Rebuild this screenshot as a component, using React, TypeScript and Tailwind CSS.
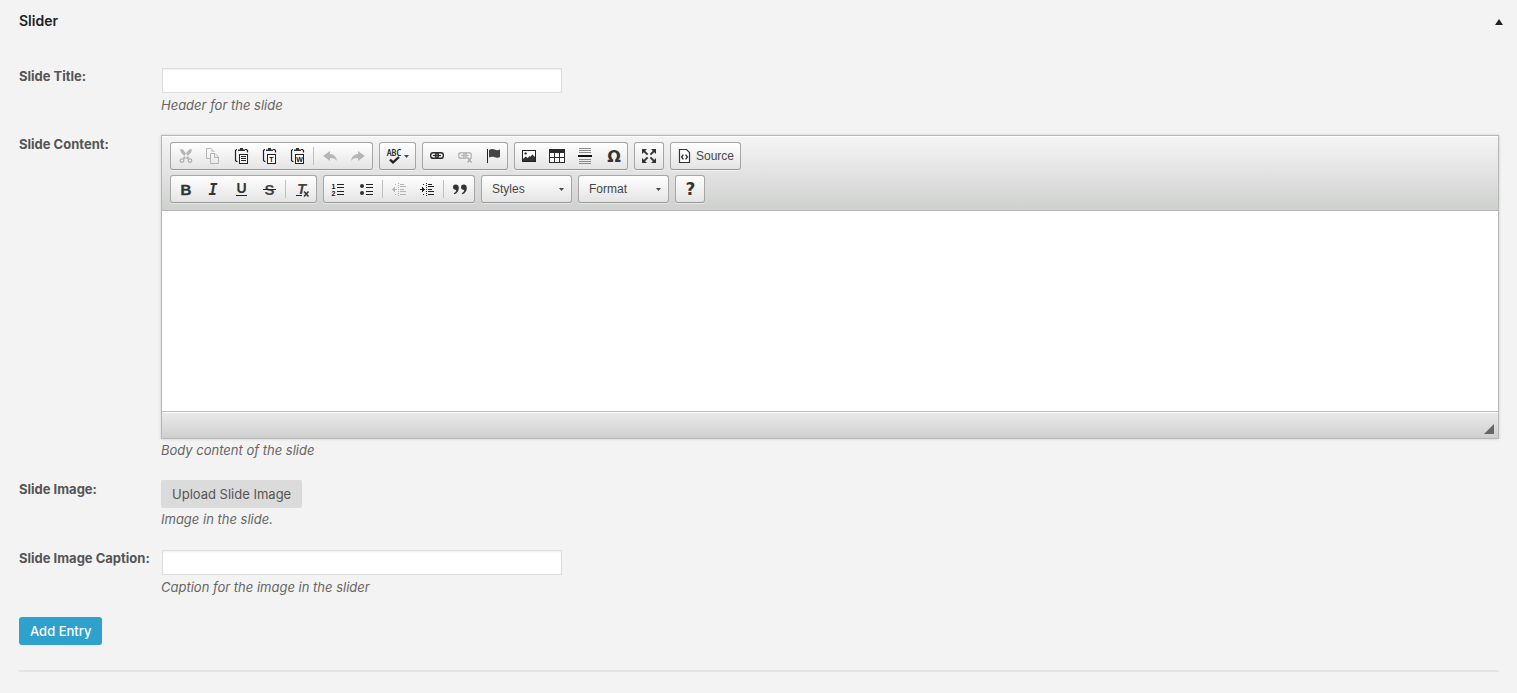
import React, { useState } from 'react';
import { clsx } from 'clsx';

const ICON_SANS = '"Liberation Sans", Arial, sans-serif';
const ICON_WIDE = '"DejaVu Sans", Verdana, sans-serif';
const ICON_MONO = '"DejaVu Sans Mono", monospace';

interface IconProps {
  children: React.ReactNode;
  crisp?: boolean;
}

function Icon({ children, crisp }: IconProps) {
  return (
    <svg
      viewBox="0 0 16 16"
      className="block h-4 w-4 shrink-0 overflow-visible"
      shapeRendering={crisp ? 'crispEdges' : 'auto'}
      fill="none"
      aria-hidden="true"
    >
      {children}
    </svg>
  );
}

const CutIcon = () => (
  <Icon>
    <path d="M3.2 1 6 1.4 12.4 10.2 10.4 11.6 3.6 4zM14.8 1 12 1.4 5.6 10.2 7.6 11.6 14.4 4z" fill="#b5b5b5" />
    <circle cx="5" cy="12.6" r="1.8" stroke="#b0b0b0" strokeWidth="1.3" />
    <circle cx="13" cy="12.6" r="1.8" stroke="#b0b0b0" strokeWidth="1.3" />
  </Icon>
);

const CopyIcon = () => (
  <Icon>
    <path d="M5 10.5H1.5V.5H6L9.5 4" stroke="#b4b4b4" />
    <path d="M6.5.5V3.5H9.5" stroke="#d0d0d0" />
    <path d="M5.5 5.5H10L13.5 9V15.5H5.5z" stroke="#b4b4b4" />
    <path d="M9.5 5.5V9.5H13.5" stroke="#b4b4b4" />
  </Icon>
);

function PasteIcon({ children }: { children: React.ReactNode }) {
  return (
    <Icon>
      <path d="M4 1.5H3.5L2.5 2.5V12.5L3.5 13.5H4.5M12 1.5H13.5L14.5 2.5V4.5" stroke="#222" strokeWidth="1.2" />
      <path d="M5 3V1.5H7V0H10V1.5H12V3z" fill="#333" />
      <rect x="6.5" y="6.5" width="8" height="9" fill="#fff" stroke="#222" />
      {children}
    </Icon>
  );
}

const PasteTextIcon = ({ letter }: { letter: string }) => (
  <PasteIcon>
    <text x="10.5" y="13.6" fontSize="7" fontWeight="700" fontFamily={ICON_SANS} textAnchor="middle" fill="#111">
      {letter}
    </text>
  </PasteIcon>
);

const UNDO_PATH = 'M1.2 8 8 3V6C12 6.2 14.4 8.8 15 13 13 10.6 11.2 10 8 10V13z';

const UndoIcon = () => (
  <Icon>
    <path d={UNDO_PATH} fill="#b5b5b5" />
  </Icon>
);

const RedoIcon = () => (
  <Icon>
    <path d={UNDO_PATH} fill="#b5b5b5" transform="translate(16 0) scale(-1 1)" />
  </Icon>
);

const SpellIcon = () => (
  <Icon>
    <text x="8" y="8" fontSize="8" fontFamily={ICON_MONO} textAnchor="middle" fill="#111" stroke="#111" strokeWidth=".2">
      ABC
    </text>
    <path d="M4 11.6 7 14.4 13 9" stroke="#222" strokeWidth="2.2" />
  </Icon>
);

const LinkShape = ({ color }: { color: string }) => (
  <>
    <rect x="1.7" y="4.7" width="7.6" height="5.6" rx="2.4" stroke={color} strokeWidth="1.4" />
    <rect x="6.7" y="4.7" width="7.6" height="5.6" rx="2.4" stroke={color} strokeWidth="1.4" />
    <path d="M4 7.5H12" stroke={color} strokeWidth="1.2" />
  </>
);

const LinkIcon = () => (
  <Icon>
    <LinkShape color="#2a2a2a" />
  </Icon>
);

const UnlinkIcon = () => (
  <Icon>
    <LinkShape color="#b8b8b8" />
    <path d="M10.5 9.5 14.5 14.5M14.5 9.5 10.5 14.5" stroke="#f4f4f4" strokeWidth="3" />
    <path d="M10.5 9.5 14.5 14.5M14.5 9.5 10.5 14.5" stroke="#aaa" strokeWidth="1.5" />
  </Icon>
);

const FlagIcon = () => (
  <Icon>
    <path d="M2.5 1V15" stroke="#222" />
    <path d="M4 2C6 .6 8 .8 9.6 1.6 11.4 2.4 13 2.4 15 1.6V9C13 10 11.2 9.8 9.6 9.2 7.6 8.4 6 8.6 4 9.6z" fill="#444" />
  </Icon>
);

const ImageIcon = () => (
  <Icon>
    <rect x="1.5" y="2.5" width="13" height="11" fill="#fff" stroke="#222" />
    <path d="M2 13V11L4.6 8.4 6.8 10 8.4 8 9.4 8.8 11.4 6.4 14 9V13z" fill="#333" />
    <circle cx="4.6" cy="5.4" r="1.2" fill="#333" />
  </Icon>
);

const TableIcon = () => (
  <Icon crisp>
    <rect x="0" y="1" width="16" height="14" fill="#2a2a2a" />
    <path d="M1 5h4v4H1zM6 5h4v4H6zM11 5h4v4h-4zM1 10h4v4H1zM6 10h4v4H6zM11 10h4v4h-4z" fill="#fff" />
  </Icon>
);

const RuleIcon = () => (
  <Icon crisp>
    <path d="M2 0h12v1H2zM2 2h12v1H2zM2 4h12v1H2zM2 11h12v1H2zM2 13h12v1H2zM2 15h12v1H2z" fill="#8a8a8a" />
    <path d="M1 7h14v2H1z" fill="#111" />
  </Icon>
);

const OmegaIcon = () => (
  <Icon>
    <text x="9" y="14" fontSize="16" fontWeight="700" fontFamily={ICON_WIDE} textAnchor="middle" fill="#333">
      Ω
    </text>
  </Icon>
);

const MaximizeIcon = () => (
  <Icon>
    <path d="M1 1H6L1 6zM15 1V6L10 1zM1 15V10L6 15zM15 15H10L15 10z" fill="#333" />
    <path d="M3 3 6.6 6.6M13 3 9.4 6.6M3 13 6.6 9.4M13 13 9.4 9.4" stroke="#333" strokeWidth="1.8" />
  </Icon>
);

const SourceIcon = () => (
  <Icon>
    <path d="M2.5 1.5H9.5L12.5 4.5V14.5H2.5z" fill="#fff" stroke="#333" strokeWidth="1.2" />
    <path d="M6.4 6.6 4.6 9 6.4 11.4M8.6 6.6 10.4 9 8.6 11.4" stroke="#333" strokeWidth="1.4" />
  </Icon>
);

const BoldIcon = () => (
  <Icon>
    <text x="9" y="14" fontSize="15" fontWeight="700" fontFamily={ICON_SANS} textAnchor="middle" fill="#333" stroke="#333" strokeWidth=".4">
      B
    </text>
  </Icon>
);

const ItalicIcon = () => (
  <Icon>
    <text x="8" y="14" fontSize="15" fontWeight="700" fontStyle="italic" fontFamily={ICON_MONO} textAnchor="middle" fill="#333">
      I
    </text>
  </Icon>
);

const UnderlineIcon = () => (
  <Icon>
    <text x="8.5" y="12" fontSize="14" fontWeight="700" fontFamily={ICON_SANS} textAnchor="middle" fill="#333">
      U
    </text>
    <path d="M3 14.5H14" stroke="#222" />
  </Icon>
);

const StrikeIcon = () => (
  <Icon>
    <text x="8.5" y="14" fontSize="15" fontWeight="700" fontFamily={ICON_SANS} textAnchor="middle" fill="#444">
      S
    </text>
    <path d="M2 8.5H15" stroke="#222" />
  </Icon>
);

const RemoveFormatIcon = () => (
  <Icon>
    <text x="7.5" y="13" fontSize="15" fontWeight="700" fontStyle="italic" fontFamily={ICON_SANS} textAnchor="middle" fill="#444">
      T
    </text>
    <path d="M2 14.5H8" stroke="#222" />
    <path d="M10 10.5 14.5 15.5M14.5 10.5 10 15.5" stroke="#333" strokeWidth="1.5" />
  </Icon>
);

const NumberedListIcon = () => (
  <Icon crisp>
    <path d="M7 3h7v1H7zM7 6h7v1H7zM7 10h7v1H7zM7 13h7v1H7z" fill="#222" />
    <text x="3.5" y="8" fontSize="7" fontWeight="700" fontFamily={ICON_SANS} textAnchor="middle" fill="#111">
      1
    </text>
    <text x="3.5" y="15" fontSize="7" fontWeight="700" fontFamily={ICON_SANS} textAnchor="middle" fill="#111">
      2
    </text>
  </Icon>
);

const BulletedListIcon = () => (
  <Icon>
    <circle cx="4" cy="5" r="2" fill="#333" />
    <circle cx="4" cy="12" r="2" fill="#333" />
    <path d="M8 3h7v1H8zM8 6h7v1H8zM8 10h7v1H8zM8 13h7v1H8z" fill="#222" />
  </Icon>
);

function IndentIcon({ color, outdent }: { color: string; outdent?: boolean }) {
  return (
    <Icon crisp>
      <path d="M9 3h4v1H9zM9 5h6v1H9zM9 8h4v1H9zM9 10h6v1H9zM9 13h6v1H9z" fill={color} />
      <path d="M7 2h1v1H7zM7 4h1v1H7zM7 6h1v1H7zM7 8h1v1H7zM7 10h1v1H7zM7 12h1v1H7zM7 14h1v1H7zM4 3h1v1H4zM4 13h1v1H4z" fill={color} />
      <path
        d={outdent ? 'M1 8h5v1H1zM2 7h1v3H2zM3 6h1v5H3z' : 'M1 8h5v1H1zM4 7h1v3H4zM3 6h1v5H3z'}
        fill={color}
      />
    </Icon>
  );
}

const QuoteIcon = () => (
  <Icon>
    <path
      d="M1 6.2A2.7 2.7 0 0 1 3.8 3.6C5.8 3.6 6.8 5 6.8 7 6.8 10 5 12.6 2.2 13.2L1.8 12.2C3.4 11.4 4.2 10.2 4.2 9 2.4 9 1 8 1 6.2zM9 6.2A2.7 2.7 0 0 1 11.8 3.6C13.8 3.6 14.8 5 14.8 7 14.8 10 13 12.6 10.2 13.2L9.8 12.2C11.4 11.4 12.2 10.2 12.2 9 10.4 9 9 8 9 6.2z"
      fill="#333"
    />
  </Icon>
);

const HelpIcon = () => (
  <Icon>
    <text x="8.5" y="14" fontSize="17" fontWeight="700" fontFamily={ICON_WIDE} textAnchor="middle" fill="#333">
      ?
    </text>
  </Icon>
);

function Caret({ className }: { className?: string }) {
  return (
    <svg viewBox="0 0 5 3" className={clsx('block h-[3px] w-[5px] shrink-0', className)} aria-hidden="true">
      <path d="M0 0H5L2.5 3z" fill="#474747" />
    </svg>
  );
}

function ToolGroup({ children }: { children: React.ReactNode }) {
  return (
    <div className="flex h-7 items-center rounded-[3px] border border-[#a6a6a6] border-b-[#979797] bg-linear-to-b from-white to-[#e4e4e4] shadow-[0_1px_0_rgba(255,255,255,0.5)]">
      {children}
    </div>
  );
}

interface ToolButtonProps {
  title: string;
  disabled?: boolean;
  children: React.ReactNode;
}

function ToolButton({ title, disabled, children }: ToolButtonProps) {
  return (
    <button type="button" title={title} aria-label={title} disabled={disabled} className="flex h-[26px] items-center px-1.5">
      {children}
    </button>
  );
}

const Separator = () => <span className="mx-0.5 h-[18px] w-px bg-[#c0c0c0]" />;

function ToolSelect({ label, options }: { label: string; options: string[] }) {
  return (
    <ToolGroup>
      <div className="relative">
        <select
          aria-label={label}
          className="block h-[26px] w-[89px] appearance-none bg-transparent pl-2.5 font-['Liberation_Sans',Arial,sans-serif] text-xs text-[#474747] outline-none"
        >
          <option>{label}</option>
          {options.map((option) => (
            <option key={option}>{option}</option>
          ))}
        </select>
        <Caret className="pointer-events-none absolute right-[7px] top-3" />
      </div>
    </ToolGroup>
  );
}

function Editor({ id }: { id: string }) {
  const [content, setContent] = useState('');

  return (
    <div className="border border-[#b6b6b6] shadow-[0_0_3px_rgba(0,0,0,0.15)]">
      <div className="flex flex-col gap-[5px] border-b border-[#b6b6b6] bg-linear-to-b from-[#f5f5f5] to-[#cfd1cf] px-2 pb-[7px] pt-1.5 shadow-[inset_0_1px_0_#fff]">
        <div className="flex flex-wrap gap-1.5">
          <ToolGroup>
            <ToolButton title="Cut" disabled><CutIcon /></ToolButton>
            <ToolButton title="Copy" disabled><CopyIcon /></ToolButton>
            <ToolButton title="Paste">
              <PasteIcon>
                <path d="M8 8.5H13M8 10.5H13M8 12.5H13" stroke="#222" />
              </PasteIcon>
            </ToolButton>
            <ToolButton title="Paste as plain text"><PasteTextIcon letter="T" /></ToolButton>
            <ToolButton title="Paste from Word"><PasteTextIcon letter="W" /></ToolButton>
            <Separator />
            <ToolButton title="Undo" disabled><UndoIcon /></ToolButton>
            <ToolButton title="Redo" disabled><RedoIcon /></ToolButton>
          </ToolGroup>
          <ToolGroup>
            <ToolButton title="Spell Check As You Type">
              <SpellIcon />
              <Caret className="ml-0.5" />
            </ToolButton>
          </ToolGroup>
          <ToolGroup>
            <ToolButton title="Link"><LinkIcon /></ToolButton>
            <ToolButton title="Unlink" disabled><UnlinkIcon /></ToolButton>
            <ToolButton title="Anchor"><FlagIcon /></ToolButton>
          </ToolGroup>
          <ToolGroup>
            <ToolButton title="Image"><ImageIcon /></ToolButton>
            <ToolButton title="Table"><TableIcon /></ToolButton>
            <ToolButton title="Insert Horizontal Line"><RuleIcon /></ToolButton>
            <ToolButton title="Insert Special Character"><OmegaIcon /></ToolButton>
          </ToolGroup>
          <ToolGroup>
            <ToolButton title="Maximize"><MaximizeIcon /></ToolButton>
          </ToolGroup>
          <ToolGroup>
            <ToolButton title="Source">
              <SourceIcon />
              <span className="pl-[3px] font-['Liberation_Sans',Arial,sans-serif] text-xs text-[#474747]">Source</span>
            </ToolButton>
          </ToolGroup>
        </div>
        <div className="flex flex-wrap gap-1.5">
          <ToolGroup>
            <ToolButton title="Bold"><BoldIcon /></ToolButton>
            <ToolButton title="Italic"><ItalicIcon /></ToolButton>
            <ToolButton title="Underline"><UnderlineIcon /></ToolButton>
            <ToolButton title="Strikethrough"><StrikeIcon /></ToolButton>
            <Separator />
            <ToolButton title="Remove Format"><RemoveFormatIcon /></ToolButton>
          </ToolGroup>
          <ToolGroup>
            <ToolButton title="Numbered List"><NumberedListIcon /></ToolButton>
            <ToolButton title="Bulleted List"><BulletedListIcon /></ToolButton>
            <Separator />
            <ToolButton title="Decrease Indent" disabled><IndentIcon color="#b4b4b4" outdent /></ToolButton>
            <ToolButton title="Increase Indent"><IndentIcon color="#222" /></ToolButton>
            <Separator />
            <ToolButton title="Block Quote"><QuoteIcon /></ToolButton>
          </ToolGroup>
          <ToolSelect label="Styles" options={['Italic Title', 'Subtitle', 'Marker']} />
          <ToolSelect label="Format" options={['Normal', 'Heading 1', 'Heading 2']} />
          <ToolGroup>
            <ToolButton title="About"><HelpIcon /></ToolButton>
          </ToolGroup>
        </div>
      </div>
      <textarea
        id={id}
        value={content}
        onChange={(e) => setContent(e.target.value)}
        className="block h-[200px] w-full resize-none bg-white p-5 outline-none"
      />
      <div className="flex h-[27px] items-end justify-end border-t border-[#bfbfbf] bg-linear-to-b from-[#ebebeb] to-[#cfcfcf] pb-1 pr-1 shadow-[inset_0_1px_0_#fff]">
        <svg viewBox="0 0 10 10" className="block h-2.5 w-2.5" aria-hidden="true">
          <path d="M10 0V10H0z" fill="#666" />
        </svg>
      </div>
    </div>
  );
}

interface FieldProps {
  id: string;
  label: string;
  description: string;
  children: React.ReactNode;
}

function Field({ id, label, description, children }: FieldProps) {
  return (
    <div className="grid grid-cols-[142px_minmax(0,1fr)]">
      <label htmlFor={id} className="whitespace-nowrap text-[13px] font-bold leading-5 text-[#555]">
        {label}
      </label>
      <div className="flex flex-col items-start gap-px pt-px">
        {children}
        <p className="text-[13px] italic leading-5 text-[#666]">{description}</p>
      </div>
    </div>
  );
}

function TextInput({ id }: { id: string }) {
  const [value, setValue] = useState('');

  return (
    <input
      id={id}
      type="text"
      value={value}
      onChange={(e) => setValue(e.target.value)}
      className="m-px block h-[25px] w-full max-w-[400px] border border-[#ddd] bg-white px-1 text-sm shadow-[inset_0_1px_2px_rgba(0,0,0,0.07)] outline-none"
    />
  );
}

export default function App() {
  const [open, setOpen] = useState(true);

  return (
    <main className="min-h-screen bg-[#f3f3f3] pl-[19px] pr-[18px] pt-[11px] font-['Inter',sans-serif]">
      <header className="flex items-center justify-between">
        <h3 className="text-sm font-semibold leading-5 text-[#222]">Slider</h3>
        <button type="button" aria-label="Toggle section" aria-expanded={open} onClick={() => setOpen(!open)} className="-mr-1 pt-0.5">
          <svg viewBox="0 0 8 6" className="block h-1.5 w-2" aria-hidden="true">
            <path d="M4 0 8 6H0z" fill="#222" />
          </svg>
        </button>
      </header>

      {open && (
        <form className="mt-[35px]" onSubmit={(e) => e.preventDefault()}>
          <div className="flex flex-col gap-[19px]">
            <Field id="slide-title" label="Slide Title:" description="Header for the slide">
              <TextInput id="slide-title" />
            </Field>
            <Field id="slide-content" label="Slide Content:" description="Body content of the slide">
              <div className="w-full">
                <Editor id="slide-content" />
              </div>
            </Field>
            <Field id="slide-image" label="Slide Image:" description="Image in the slide.">
              <button
                id="slide-image"
                type="button"
                className="block h-7 whitespace-nowrap rounded-xs bg-[#dbdbdb] px-[11px] pt-0.5 text-[13px] text-[#555]"
              >
                Upload Slide Image
              </button>
            </Field>
            <Field id="slide-caption" label="Slide Image Caption:" description="Caption for the image in the slider">
              <TextInput id="slide-caption" />
            </Field>
          </div>
          <button type="button" className="mt-5 block h-7 rounded-[3px] bg-[#2ea2cc] px-[11px] pt-0.5 text-[13px] font-medium text-white">
            Add Entry
          </button>
        </form>
      )}

      <hr className="mt-[25px] border-t-2 border-[#e4e4e4]" />
    </main>
  );
}
